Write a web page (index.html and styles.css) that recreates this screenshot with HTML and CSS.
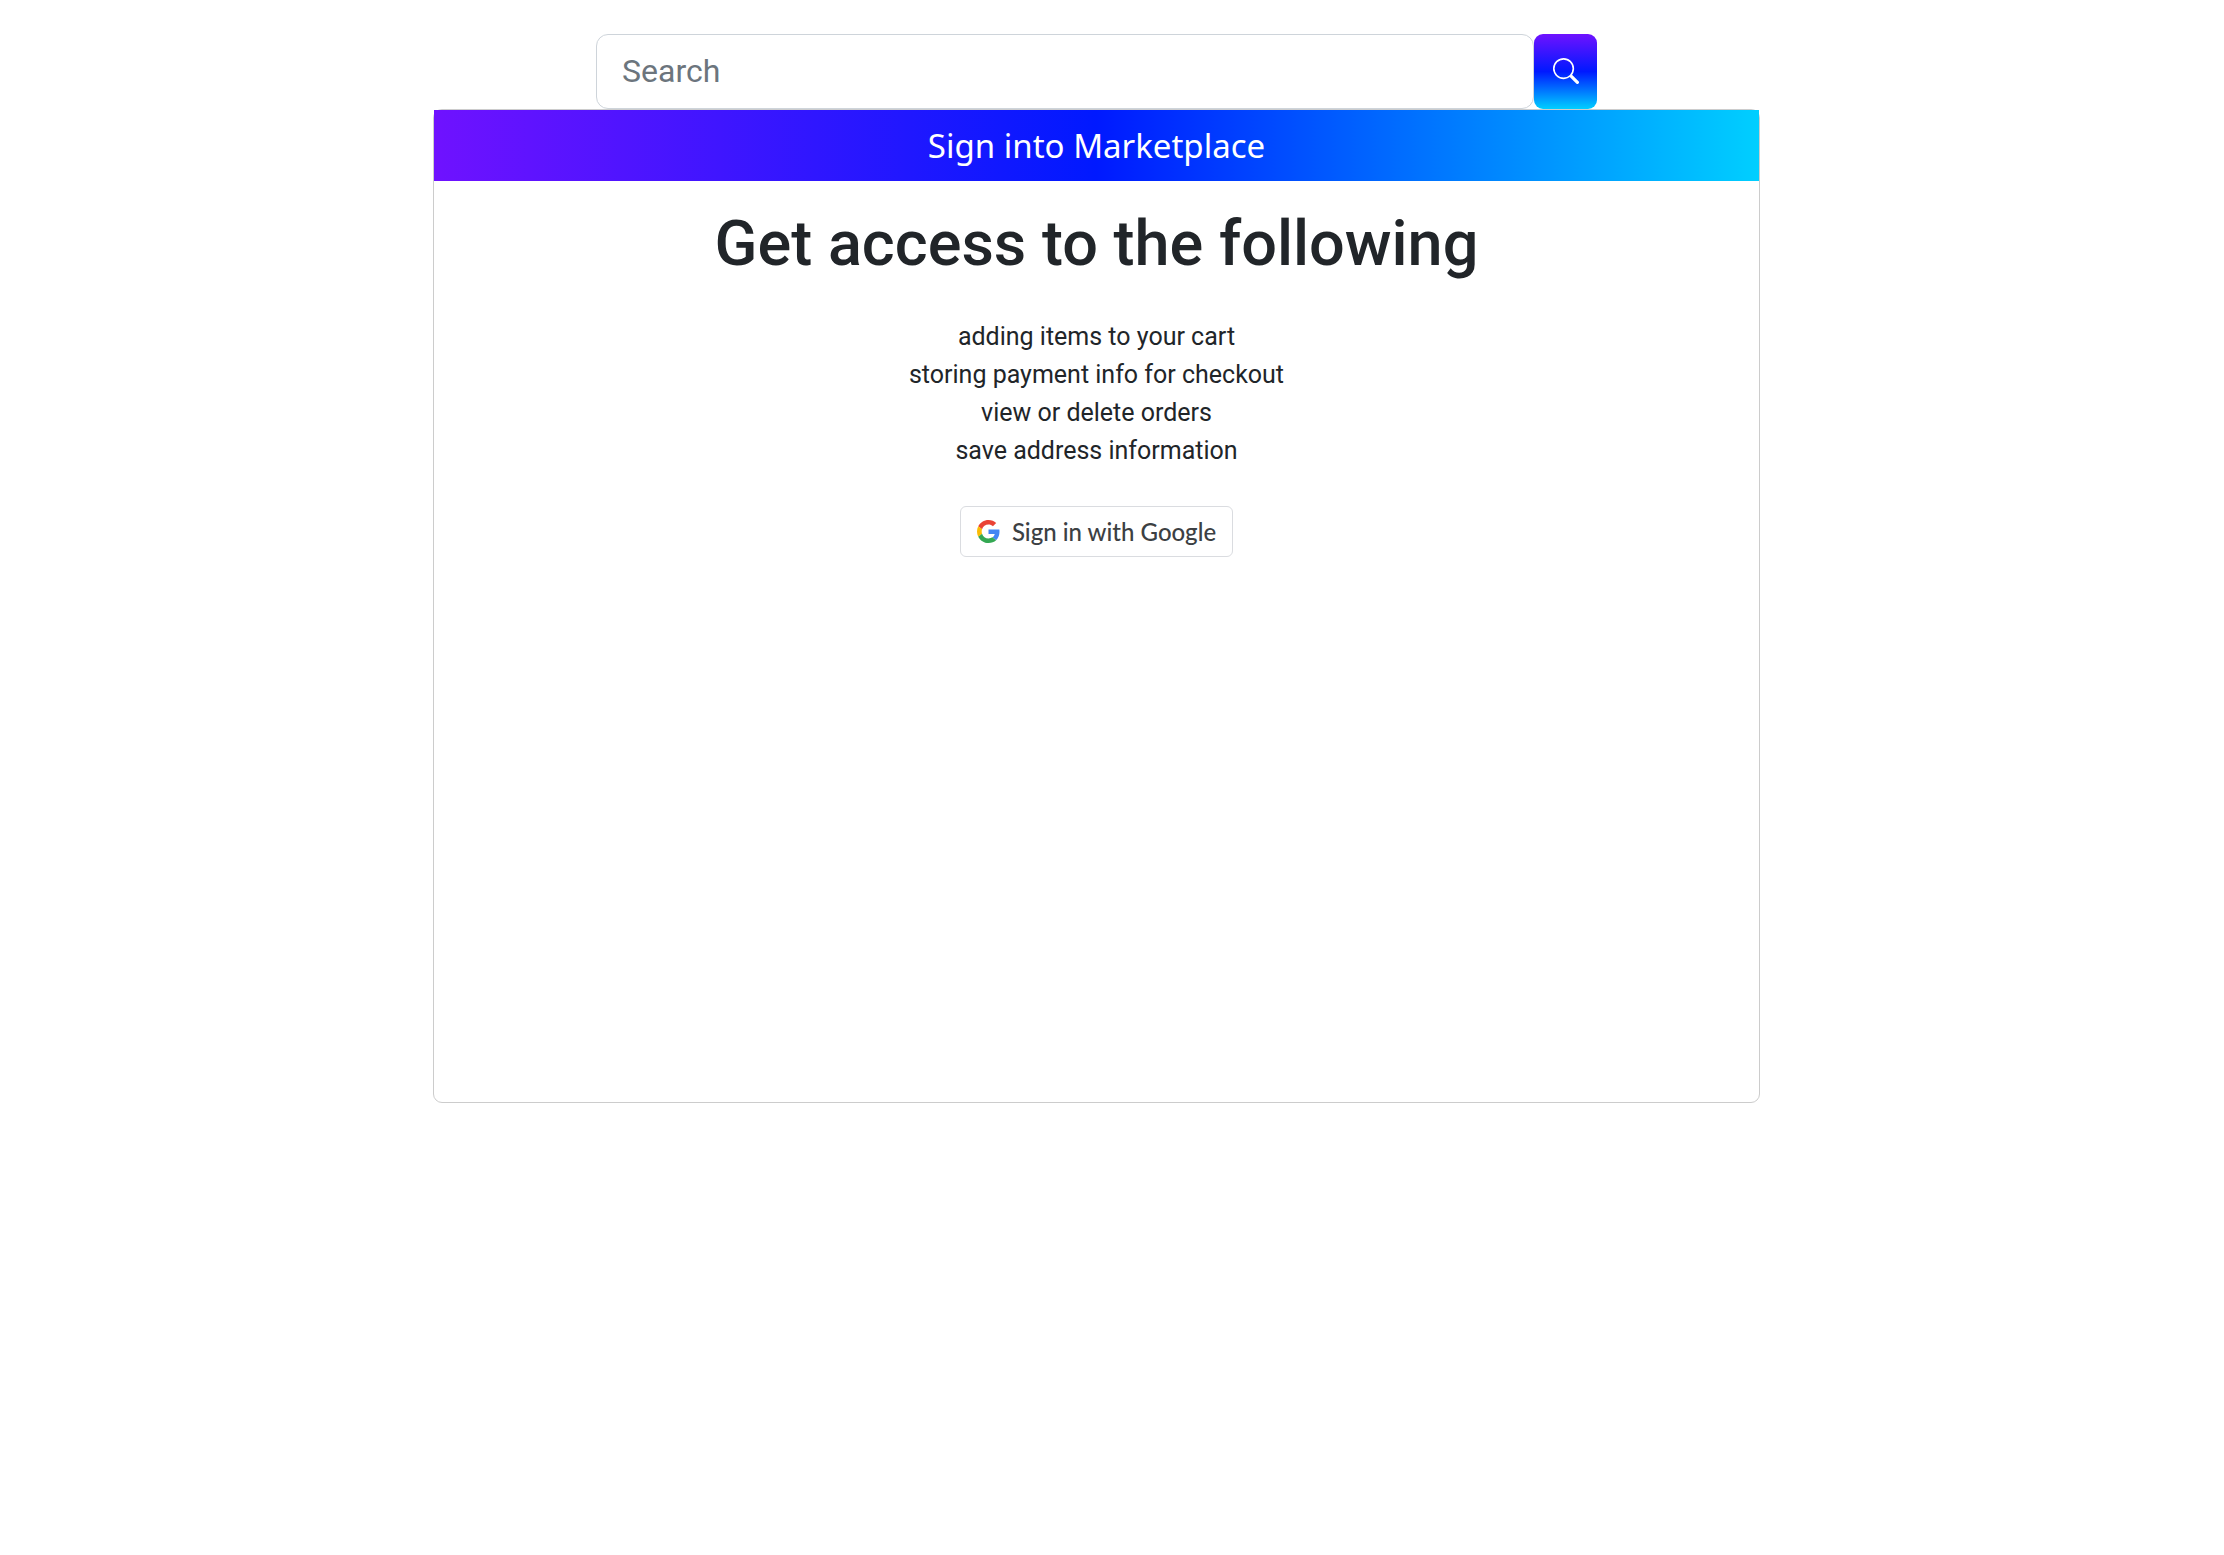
FILE: index.html
```html
<!DOCTYPE html>
<html lang="en">
<head>
<meta charset="utf-8">
<meta name="viewport" content="width=device-width, initial-scale=1">
<title>Marketplace</title>
<link rel="stylesheet" href="styles.css">
</head>
<body>
<form class="search" role="search">
  <input class="search-input" type="search" placeholder="Search" aria-label="Search">
  <button class="search-button" type="submit" aria-label="Submit search">
    <svg class="search-icon" viewBox="0 0 16 16" fill="currentColor" aria-hidden="true"><path d="M11.742 10.344a6.500 6.500 0 1 0-1.397 1.398h-.001c.03.04.062.078.098.115l3.850 3.850a1 1 0 0 0 1.415-1.414l-3.850-3.850a1.007 1.007 0 0 0-.115-.1zM12 6.500a5.500 5.500 0 1 1-11 0 5.500 5.500 0 0 1 11 0z"/></svg>
  </button>
</form>
<main class="card">
  <header class="card-header">Sign into Marketplace</header>
  <div class="card-body">
    <h1 class="title">Get access to the following</h1>
    <ul class="benefits">
      <li>adding items to your cart</li>
      <li>storing payment info for checkout</li>
      <li>view or delete orders</li>
      <li>save address information</li>
    </ul>
    <button class="google-button" type="button">
      <svg class="google-icon" viewBox="0 0 48 48" aria-hidden="true">
        <path fill="#EA4335" d="M24 9.500c3.540 0 6.710 1.220 9.210 3.600l6.850-6.850C35.900 2.380 30.470 0 24 0 14.620 0 6.510 5.380 2.560 13.220l7.980 6.190C12.430 13.720 17.740 9.500 24 9.500z"/>
        <path fill="#4285F4" d="M46.980 24.550c0-1.570-.15-3.090-.38-4.550H24v9.020h12.940c-.58 2.960-2.260 5.480-4.780 7.180l7.730 6c4.510-4.180 7.090-10.360 7.090-17.650z"/>
        <path fill="#FBBC05" d="M10.530 28.590c-.48-1.450-.76-2.990-.76-4.590s.27-3.140.76-4.590l-7.980-6.190C.92 16.460 0 20.120 0 24c0 3.880.92 7.540 2.560 10.780l7.970-6.190z"/>
        <path fill="#34A853" d="M24 48c6.480 0 11.930-2.130 15.890-5.810l-7.730-6c-2.150 1.450-4.920 2.300-8.160 2.300-6.260 0-11.570-4.220-13.470-9.910l-7.980 6.190C6.510 42.620 14.620 48 24 48z"/>
      </svg>
      <span>Sign in with Google</span>
    </button>
  </div>
</main>
</body>
</html>
```
FILE: styles.css
```css
* {
  box-sizing: border-box;
}

body {
  display: flex;
  flex-direction: column;
  align-items: center;
  margin: 0;
  padding: 34px 31px 34px 0;
  background: #fff;
  color: #212529;
  font: 25px/38px Roboto, sans-serif;
}

.search {
  display: flex;
  width: 100%;
  max-width: 1001px;
}

.search-input {
  flex: 1;
  min-width: 0;
  height: 75px;
  padding: 0 25px 2px;
  border: 1px solid #ced4da;
  border-radius: 12px;
  background: #fff;
  color: inherit;
  font: 32px/48px Roboto, sans-serif;
}

.search-input::placeholder {
  color: #6c757d;
  opacity: 1;
}

.search-button {
  display: flex;
  align-items: center;
  justify-content: center;
  width: 63px;
  padding: 0 0 2px;
  border: 0;
  border-radius: 9px;
  background: linear-gradient(#6f12ff, #0019ff 50%, #00cfff);
  color: #fff;
}

.search-icon {
  width: 26px;
  height: 26px;
}

.card {
  width: 100%;
  max-width: 1327px;
  min-height: 994px;
  border: 1px solid #cccccc;
  border-radius: 9px;
}

.card-header {
  padding: 12px 24px;
  background: linear-gradient(90deg, #6f12ff, #0019ff 50%, #00cfff);
  color: #fff;
  font: 33px/47px "Noto Sans", sans-serif;
  text-align: center;
}

.card-body {
  display: flex;
  flex-direction: column;
  align-items: center;
  padding: 25px;
  text-align: center;
}

.title {
  margin: 0 0 36px;
  font-size: 63px;
  font-weight: 500;
  line-height: 76px;
}

.benefits {
  margin: 0 0 36px;
  padding: 0;
  list-style: none;
}

.google-button {
  display: flex;
  align-items: center;
  gap: 12px;
  height: 51px;
  padding: 0 16px;
  border: 1px solid #dadce0;
  border-radius: 6px;
  background: #fff;
  color: #3c4043;
  font: 500 24px/32px Lato, sans-serif;
}

.google-icon {
  width: 23px;
  height: 23px;
}
```
